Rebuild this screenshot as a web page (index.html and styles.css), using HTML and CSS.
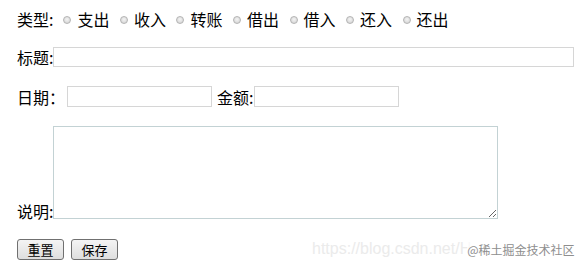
FILE: index.html
```html
<!DOCTYPE html>
<html lang="zh-CN">
<head>
  <meta charset="UTF-8">
  <meta name="viewport" content="width=device-width, initial-scale=1.0">
  <title>记账</title>
  <link rel="stylesheet" href="styles.css">
</head>
<body>
  <form class="bill-form">
    <div class="row type-row">
      <span class="label">类型:</span>
      <label class="opt"><input type="radio" name="type" value="1">支出</label>
      <label class="opt"><input type="radio" name="type" value="2">收入</label>
      <label class="opt"><input type="radio" name="type" value="3">转账</label>
      <label class="opt"><input type="radio" name="type" value="4">借出</label>
      <label class="opt"><input type="radio" name="type" value="5">借入</label>
      <label class="opt"><input type="radio" name="type" value="6">还入</label>
      <label class="opt"><input type="radio" name="type" value="7">还出</label>
    </div>

    <div class="row title-row">
      <label class="label">标题:</label>
      <input type="text" class="title-input">
    </div>

    <div class="row date-row">
      <label class="label">日期：</label>
      <input type="text" class="short-input date-input">
      <label class="label amount-label">金额:</label>
      <input type="text" class="short-input">
    </div>

    <div class="row desc-row">
      <label class="label">说明:</label>
      <textarea class="desc"></textarea>
    </div>

    <div class="row btn-row">
      <button type="reset" class="btn">重置</button>
      <button type="button" class="btn">保存</button>
    </div>
  </form>

  <div class="watermark">
    <span class="wm-url">https://blog.csdn.net/H</span><span class="wm-site">@稀土掘金技术社区</span>
  </div>
</body>
</html>
```

FILE: styles.css
```css
body {
  margin: 0;
  padding: 9px 0 0 17px;
  font-family: "Noto Sans CJK SC", "Liberation Sans", sans-serif;
  font-size: 16px;
  color: #000;
  background: #fff;
  position: relative;
  height: 268px;
  box-sizing: border-box;
}
.bill-form {
  display: flex;
  flex-direction: column;
}
.row {
  display: flex;
  align-items: center;
}
.label {
  line-height: 16px;
  white-space: nowrap;
}
.type-row {
  height: 20px;
}
.opt {
  display: flex;
  align-items: center;
  margin-right: 10.5px;
  line-height: 16px;
}
.type-row .label {
  margin-right: 10px;
}
.opt input {
  appearance: none;
  -webkit-appearance: none;
  width: 8px;
  height: 8px;
  margin: 1px 6px 0 0;
  border: 1px solid #b4b4b4;
  border-radius: 50%;
  background: radial-gradient(circle at 50% 40%, #f4f4f4, #cfcfcf);
  box-sizing: border-box;
  flex-shrink: 0;
}
.title-row {
  margin-top: 18px;
}
.title-input {
  width: 521px;
  height: 20px;
  flex-shrink: 0;
}
input[type="text"], .desc {
  box-sizing: border-box;
  border: 1px solid #d6d6d6;
  margin: 0;
  padding: 1px 3px;
  font-size: 14px;
  background: #fff;
}
.date-row {
  margin-top: 19px;
}
.date-input {
  margin-left: 2px !important;
  margin-right: 5px !important;
}
.short-input {
  width: 145px;
  height: 21px;
}
.amount-label {
  margin-right: 1px;
}
.desc-row {
  margin-top: 19px;
  align-items: flex-end;
}
.desc {
  width: 445px;
  height: 93px;
  border-color: #c3d2d4;
  display: block;
  flex-shrink: 0;
}
.btn-row {
  margin-top: 20px;
  gap: 7px;
}
.btn {
  width: 47px;
  height: 21px;
  padding: 0;
  font-family: "Noto Sans CJK SC", sans-serif;
  font-size: 13px;
  line-height: 19px;
  color: #000;
  border: 1px solid #707070;
  border-radius: 3px;
  background: linear-gradient(#f4f4f4, #dedede);
}
.watermark {
  position: absolute;
  left: 312px;
  top: 240px;
  display: flex;
  align-items: center;
  height: 18px;
  white-space: nowrap;
}
.wm-url {
  font-family: "Liberation Sans", sans-serif;
  font-size: 16px;
  color: #ebebeb;
}
.wm-site {
  margin-left: -4px;
  font-size: 12px;
  color: #8e8e8e;
  background: rgba(255, 255, 255, 0.7);
}
```
